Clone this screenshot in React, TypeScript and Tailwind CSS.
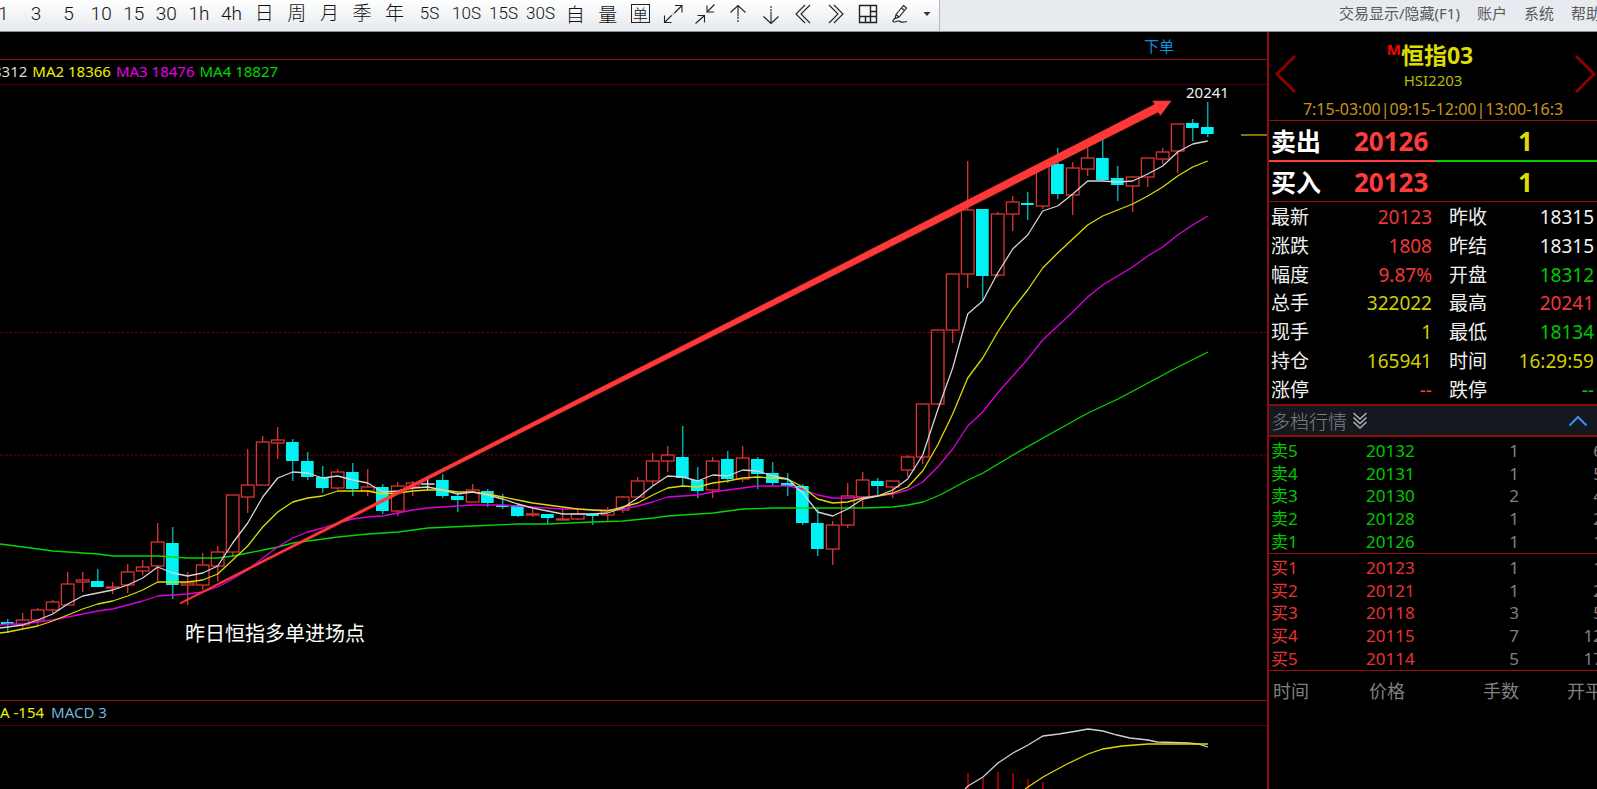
import type { ReactNode } from 'react';

type Kind = 'up' | 'down' | 'flat';

// high, body top, body bottom, low
type Candle = [number, number, number, number, Kind];

const STEP = 15;
const FIRST_X = 7.7;

const candles: Candle[] = [
  [619, 622, 624, 633, 'down'],
  [613, 620, 625, 628, 'up'],
  [608, 610, 620, 626, 'up'],
  [600, 602, 610, 613, 'up'],
  [572, 584, 605, 605, 'up'],
  [572, 580, 582, 592, 'up'],
  [569, 581, 587, 587, 'down'],
  [582, 587, 588, 594, 'up'],
  [564, 572, 585, 593, 'up'],
  [560, 567, 571, 575, 'up'],
  [523, 542, 566, 581, 'up'],
  [527, 543, 585, 599, 'down'],
  [572, 583, 585, 605, 'up'],
  [553, 565, 585, 590, 'up'],
  [546, 552, 566, 582, 'up'],
  [495, 495, 552, 557, 'up'],
  [449, 485, 497, 513, 'up'],
  [436, 442, 485, 485, 'up'],
  [427, 440, 443, 459, 'up'],
  [439, 442, 461, 481, 'down'],
  [452, 461, 477, 480, 'down'],
  [466, 477, 488, 493, 'down'],
  [469, 472, 488, 490, 'up'],
  [463, 472, 489, 496, 'down'],
  [469, 487, 491, 496, 'up'],
  [484, 487, 511, 514, 'down'],
  [482, 486, 511, 516, 'up'],
  [481, 483, 487, 496, 'up'],
  [477, 484, 484, 490, 'flat'],
  [474, 480, 496, 498, 'down'],
  [493, 496, 500, 512, 'down'],
  [484, 490, 502, 502, 'up'],
  [489, 491, 503, 507, 'down'],
  [494, 505, 507, 509, 'down'],
  [503, 505, 516, 517, 'down'],
  [508, 514, 515, 517, 'up'],
  [514, 514, 518, 524, 'down'],
  [509, 519, 520, 520, 'up'],
  [509, 514, 519, 520, 'up'],
  [514, 514, 516, 525, 'down'],
  [507, 510, 515, 522, 'up'],
  [496, 497, 510, 513, 'up'],
  [477, 481, 497, 497, 'up'],
  [453, 461, 481, 485, 'up'],
  [446, 455, 461, 472, 'up'],
  [426, 457, 478, 487, 'down'],
  [467, 480, 491, 498, 'down'],
  [457, 461, 490, 498, 'up'],
  [451, 459, 479, 483, 'down'],
  [446, 458, 479, 482, 'up'],
  [457, 459, 474, 489, 'down'],
  [462, 473, 483, 486, 'down'],
  [473, 483, 486, 496, 'down'],
  [484, 486, 523, 525, 'down'],
  [509, 523, 549, 556, 'down'],
  [521, 525, 549, 565, 'up'],
  [483, 496, 525, 528, 'up'],
  [472, 480, 497, 508, 'up'],
  [478, 481, 486, 495, 'down'],
  [481, 481, 487, 498, 'up'],
  [455, 457, 470, 477, 'up'],
  [404, 404, 457, 464, 'up'],
  [330, 330, 404, 405, 'up'],
  [274, 274, 330, 343, 'up'],
  [161, 210, 274, 288, 'up'],
  [209, 209, 276, 301, 'down'],
  [212, 214, 275, 277, 'up'],
  [196, 202, 214, 231, 'up'],
  [192, 203, 205, 220, 'down'],
  [165, 166, 206, 209, 'up'],
  [148, 164, 194, 199, 'down'],
  [162, 168, 195, 215, 'up'],
  [147, 158, 169, 176, 'up'],
  [139, 158, 180, 181, 'down'],
  [166, 178, 185, 201, 'down'],
  [176, 177, 186, 212, 'up'],
  [158, 158, 177, 187, 'up'],
  [148, 152, 159, 164, 'up'],
  [124, 124, 151, 173, 'up'],
  [119, 123, 128, 141, 'down'],
  [102, 127, 134, 137, 'down'],
];

const ma1 = [
  627, 625, 620, 614, 604, 596, 593, 590, 585, 578, 567, 573, 576, 573, 566, 543, 523, 497, 478, 472,
  473, 478, 476, 480, 483, 492, 491, 488, 487, 490, 494, 492, 495, 499, 504, 508, 511, 514, 514, 514,
  513, 508, 498, 486, 476, 477, 481, 475, 476, 470, 471, 476, 479, 493, 512, 516, 509, 499, 496, 490,
  479, 455, 410, 368, 314, 301, 273, 249, 235, 211, 206, 194, 181, 181, 182, 181, 174, 166, 152, 144, 141,
];

const ma2 = [
  632, 629, 626, 621, 615, 609, 604, 601, 596, 590, 582, 582, 582, 580, 574, 560, 546, 527, 512, 502,
  498, 496, 491, 491, 491, 494, 493, 491, 490, 490, 492, 492, 494, 497, 500, 503, 505, 507, 509, 510,
  511, 507, 503, 495, 488, 486, 487, 483, 481, 478, 477, 478, 479, 487, 499, 503, 502, 498, 496, 493,
  487, 471, 445, 414, 378, 358, 332, 309, 290, 268, 253, 239, 225, 216, 210, 204, 196, 187, 176, 167, 161,
];

const ma3 = [
  624, 624, 622, 620, 617, 614, 611, 609, 605, 601, 596, 595, 594, 592, 587, 579, 570, 558, 547, 538,
  532, 528, 523, 519, 517, 516, 513, 510, 508, 507, 506, 505, 505, 505, 506, 507, 508, 509, 509, 510,
  510, 509, 506, 502, 497, 496, 495, 492, 490, 488, 486, 486, 486, 489, 495, 498, 498, 497, 496, 494,
  490, 482, 467, 449, 426, 412, 393, 376, 359, 340, 326, 312, 297, 285, 276, 267, 256, 247, 235, 225, 216,
];

const ma4 =
  '0,544 8,545 23,547 38,549 53,551 68,552 98,554 113,556 158,556 188,558 218,558 233,556 248,553 263,550 278,547 293,543 308,541 323,539 338,537 368,534 398,532 428,528 473,526 518,524 548,524 593,522 623,521 653,518 668,516 713,513 743,509 773,508 803,508 833,508 863,508 893,507 908,505 923,502 940,495 968,480 983,473 1013,455 1043,438 1088,413 1118,399 1148,383 1178,367 1208,352';

const DIF =
  '965,789 968,786 983,777 998,763 1013,753 1028,745 1043,736 1059,734 1077,731 1088,729 1103,731 1117,735 1130,738 1148,740 1157,742 1188,743 1198,744 1208,747';
const DEA = '1025,789 1028,787 1043,777 1067,764 1088,754 1103,749 1122,746 1148,744 1208,744';
const macdBars = [773, 778, 772, 773, 779, 782];

const toPoints = (ys: number[]) => `0,${ys[0] + 1} ` + ys.map((y, i) => `${FIRST_X + i * STEP},${y}`).join(' ');

const periods = ['1', '3', '5', '10', '15', '30', '1h', '4h', '日', '周', '月', '季', '年'];
const seconds = ['5S', '10S', '15S', '30S'];

const RED = 'text-[#f03838]';
const GREEN = 'text-[#00c800]';
const YELLOW = 'text-[#cfcf00]';
const WHITE = 'text-[#f0f0f0]';

const stats = [
  ['最新', '20123', RED, '昨收', '18315', WHITE],
  ['涨跌', '1808', RED, '昨结', '18315', WHITE],
  ['幅度', '9.87%', RED, '开盘', '18312', GREEN],
  ['总手', '322022', YELLOW, '最高', '20241', RED],
  ['现手', '1', YELLOW, '最低', '18134', GREEN],
  ['持仓', '165941', YELLOW, '时间', '16:29:59', YELLOW],
  ['涨停', '--', RED, '跌停', '--', GREEN],
];

const asks = [
  ['卖5', '20132', '1', '6'],
  ['卖4', '20131', '1', '5'],
  ['卖3', '20130', '2', '4'],
  ['卖2', '20128', '1', '2'],
  ['卖1', '20126', '1', '1'],
];

const bids = [
  ['买1', '20123', '1', '1'],
  ['买2', '20121', '1', '2'],
  ['买3', '20118', '3', '5'],
  ['买4', '20115', '7', '12'],
  ['买5', '20114', '5', '17'],
];

function Icon({ children }: { children: ReactNode }) {
  return (
    <svg width="20" height="20" viewBox="0 0 20 20" fill="none" stroke="#222" strokeWidth="1.1" aria-hidden="true">
      {children}
    </svg>
  );
}

function ToolButton({ label, children }: { label?: string; children: ReactNode }) {
  return (
    <button type="button" aria-label={label} className="flex flex-1 items-center justify-center whitespace-nowrap">
      {children}
    </button>
  );
}

function Toolbar() {
  return (
    <header className="flex h-8 shrink-0 border-b border-[#8e9196] bg-[#e7eaef]">
      <div className="-ml-[13px] flex shrink-0 border-r border-[#b4b8bd] bg-linear-to-b from-white to-[#e6e9ee] pb-1 text-[19px] leading-none text-[#111]">
        <div className="flex w-[424px] font-['Roboto','Noto_Sans_CJK_SC',sans-serif] font-light">
          {periods.map((p) => (
            <ToolButton key={p}>{p}</ToolButton>
          ))}
        </div>
        <div className="flex w-[148px] font-['Roboto',sans-serif] text-[17px] font-light">
          {seconds.map((s) => (
            <ToolButton key={s}>{s}</ToolButton>
          ))}
        </div>
        <div className="flex w-[358px] font-['Noto_Sans_CJK_SC',sans-serif] font-light">
          <ToolButton>自</ToolButton>
          <ToolButton>量</ToolButton>
          <ToolButton>
            <span className="flex size-[19px] items-center justify-center border border-[#222] text-[15px]">单</span>
          </ToolButton>
          <ToolButton label="放大">
            <Icon>
              <path d="M12 1.5h7v7M1.5 11.500v7h7" />
              <path d="M19 1.500 12 8.500M1.500 18.500l7-7" />
              <path d="M12 8.500l-3.500 3" strokeDasharray="1 1" />
            </Icon>
          </ToolButton>
          <ToolButton label="缩小">
            <Icon>
              <path d="M12 1.500v6.500h7M2.500 11.500h7v7" />
              <path d="M19.500 .5 12 8M.5 19.500l9-8" />
            </Icon>
          </ToolButton>
          <ToolButton label="上移">
            <Icon>
              <path d="M2.500 8.500 10 1.500l7.500 7M10 1.500v11" />
              <path d="M10 13v6" strokeDasharray="2 1" />
            </Icon>
          </ToolButton>
          <ToolButton label="下移">
            <Icon>
              <path d="M2.500 12.500l7.500 7 7.500-7M10 19.500v-12" />
              <path d="M10 7V2" strokeDasharray="2 1" />
            </Icon>
          </ToolButton>
          <ToolButton label="后退">
            <Icon>
              <path d="M12 1 3 10l9 9M17 1l-9 9 9 9" />
            </Icon>
          </ToolButton>
          <ToolButton label="前进">
            <Icon>
              <path d="M3 1l9 9-9 9M8 1l9 9-9 9" />
            </Icon>
          </ToolButton>
          <ToolButton label="布局">
            <Icon>
              <path d="M1.500 1.500h17v17h-17zM12.500 1.500v17M1.500 12.500h17M12.500 7.500h6M7.500 12.500v6" strokeWidth="1.400" />
            </Icon>
          </ToolButton>
          <ToolButton label="画线">
            <Icon>
              <path d="M12.500 1.500l3 2.500-7.500 9-4 1.500 1-4zM10.500 4l3 2.500M5 10.500l3 2.500" />
              <path d="M4 14.500c-2 1-3 3-1 3.500s4-2 5-1 2 2 8 .5" />
            </Icon>
          </ToolButton>
        </div>
        <button type="button" aria-label="更多" className="flex w-[22px] items-center pl-1">
          <svg width="12" height="8" viewBox="0 0 12 8" aria-hidden="true">
            <path d="M2.500 2h7L6 6z" fill="#333" />
          </svg>
        </button>
      </div>
      <nav className="-mr-1 ml-auto flex items-center gap-[17px] whitespace-nowrap pb-1 text-[15px] text-[#5a5a5a]">
        <a href="#orders">交易显示/隐藏(F1)</a>
        <a href="#account">账户</a>
        <a href="#system">系统</a>
        <a href="#help">帮助</a>
      </nav>
    </header>
  );
}

function CandleShape({ x, candle }: { x: number; candle: Candle }) {
  const [high, top, bottom, low, kind] = candle;
  if (kind === 'flat') {
    return <path d={`M${x} ${high}V${low}M${x - 7} ${top}h14`} stroke="#d8d8d8" strokeWidth="1.3" />;
  }
  if (kind === 'down') {
    return (
      <g>
        <path d={`M${x} ${high}V${low}`} stroke="#00a8a8" strokeWidth="1.5" />
        <rect x={x - 6.7} y={top} width="12.700" height={Math.max(bottom - top, 2)} fill="#00f2f2" />
      </g>
    );
  }
  return (
    <g stroke="#dc3434" strokeWidth="1.3" fill="none">
      <path d={`M${x} ${high}V${top}M${x} ${bottom}V${low}`} />
      <rect x={x - 6.3} y={top} width="12.600" height={bottom - top} />
    </g>
  );
}

function PriceChart() {
  return (
    <svg className="h-full w-full" viewBox="0 85 1267 615" preserveAspectRatio="xMaxYMin slice" fill="none">
      <g stroke="#7a0000" strokeDasharray="3 1.500">
        <path d="M0 332.500H1267M0 455H1267" />
      </g>
      {candles.map((c, i) => (
        <CandleShape key={i} x={FIRST_X + i * STEP} candle={c} />
      ))}
      <g strokeWidth="1.300" strokeLinejoin="round">
        <polyline points={ma4} stroke="#00d800" />
        <polyline points={toPoints(ma3)} stroke="#dc00dc" />
        <polyline points={toPoints(ma2)} stroke="#dcdc00" />
        <polyline points={toPoints(ma1)} stroke="#d4d4d4" />
      </g>
      <path d="M1241 135h26" stroke="#a8a000" strokeWidth="1.500" />
      <polygon
        points="180,602.700 1155,104.300 1152.700,101 1171,101 1160.500,115.300 1158,112 180.500,604"
        fill="#ff3838"
        stroke="#ff3838"
        strokeWidth=".6"
      />
      <text x="1186" y="98" fontSize="15" fill="#f0f0f0">20241</text>
      <text x="185" y="641" fontSize="20" fill="#fff">昨日恒指多单进场点</text>
    </svg>
  );
}

function MacdChart() {
  return (
    <svg className="h-full w-full" viewBox="0 726 1267 63" preserveAspectRatio="xMaxYMin slice" fill="none">
      {macdBars.map((y, i) => (
        <path key={i} d={`M${968 + i * STEP} ${y}V789`} stroke="#b40000" strokeWidth="1.600" />
      ))}
      <polyline points={DIF} stroke="#d0d0d0" strokeWidth="1.300" />
      <polyline points={DEA} stroke="#dcdc00" strokeWidth="1.300" />
    </svg>
  );
}

function ChartPanel() {
  return (
    <main className="flex min-w-0 flex-1 flex-col overflow-hidden whitespace-nowrap text-[15px]">
      <div className="flex h-7 shrink-0 items-center justify-end border-b border-[#960a0a] pt-[2px] pr-[93px]">
        <button type="button" className="text-[#1090dc]">下单</button>
      </div>
      <div className="-ml-[7px] flex h-[25px] shrink-0 items-center gap-[5px] border-b border-[#560000] pb-[2px]">
        <span className="text-[#d8d8d8]">8312</span>
        <span className="text-[#f0f000]">MA2 18366</span>
        <span className="text-[#e800e8]">MA3 18476</span>
        <span className="text-[#00d800]">MA4 18827</span>
      </div>
      <div className="min-h-0 flex-1">
        <PriceChart />
      </div>
      <div className="flex h-[26px] shrink-0 items-center gap-[7px] border-y border-t-[#960a0a] border-b-[#560000] pb-[2px]">
        <span className="text-[#f0f000]">A -154</span>
        <span className="text-[#70b4dc]">MACD 3</span>
      </div>
      <div className="h-[63px] shrink-0">
        <MacdChart />
      </div>
    </main>
  );
}

function DepthTable({ rows, tone }: { rows: string[][]; tone: string }) {
  return (
    <table className="h-[116px] w-[334px] table-fixed border-separate border-spacing-0 pt-[2px] text-[17px] leading-none">
      <colgroup>
        <col className="w-[97px]" />
        <col className="w-[70px]" />
        <col className="w-[83px]" />
        <col className="w-[84px]" />
      </colgroup>
      <tbody>
        {rows.map(([level, price, qty, total]) => (
          <tr key={level}>
            <th scope="row" className={`p-0 pl-[2px] text-left font-normal ${tone}`}>{level}</th>
            <td className={`p-0 ${tone}`}>{price}</td>
            <td className="p-0 text-right text-[#808080]">{qty}</td>
            <td className="p-0 text-right text-[#808080]">{total}</td>
          </tr>
        ))}
      </tbody>
    </table>
  );
}

function QuotePanel() {
  return (
    <aside className="w-[330px] shrink-0 overflow-hidden whitespace-nowrap border-l-2 border-[#8c0c0c]">
      <section className="flex h-[89px] items-center justify-between border-b border-[#960a0a]">
        <button type="button" aria-label="上一个合约" className="shrink-0 pb-1 pl-[5px]">
          <svg width="22" height="38" viewBox="0 0 22 38" fill="none" stroke="#8c0000" strokeWidth="3" aria-hidden="true">
            <path d="M21 1 3 19l18 18" />
          </svg>
        </button>
        <div className="flex w-0 flex-col items-center">
          <h1 className="flex items-start pt-2 pr-[6px] text-[23px] leading-[32px] font-bold text-[#dcdc00]">
            <span className="text-[15px] leading-[20px] text-[#ff0000]">M</span>
            恒指03
          </h1>
          <p className="text-[15px] leading-[18px] text-[#b4be00]">HSI2203</p>
          <p className="pt-2 text-[16px] leading-[24px] text-[#c8961e]">7:15-03:00|09:15-12:00|13:00-16:3</p>
        </div>
        <button type="button" aria-label="下一个合约" className="shrink-0 pb-1 pl-[5px]">
          <svg width="22" height="38" viewBox="0 0 22 38" fill="none" stroke="#8c0000" strokeWidth="3" aria-hidden="true">
            <path d="M1 1l18 18L1 37" />
          </svg>
        </button>
      </section>

      <section className="border-b border-[#960a0a] text-[25px] leading-[38px] font-bold">
        <div className="grid grid-cols-[83px_1fr_79px] pt-px pl-[2px]">
          <span className="text-white">卖出</span>
          <span className="text-[26px] text-[#ff3c3c]">20126</span>
          <span className="text-[26px] text-[#dcdc00]">1</span>
        </div>
        <div className="flex h-[2px]">
          <div className="w-[51%] bg-[#ff3c3c]" />
          <div className="flex-1 bg-[#00d200]" />
        </div>
        <div className="grid grid-cols-[83px_1fr_79px] pt-px pl-[2px]">
          <span className="text-white">买入</span>
          <span className="text-[26px] text-[#ff3c3c]">20123</span>
          <span className="text-[26px] text-[#dcdc00]">1</span>
        </div>
      </section>

      <table className="h-[202px] w-full table-fixed text-[19px] leading-none">
        <colgroup>
          <col className="w-[60px]" />
          <col className="w-[103px]" />
          <col className="w-[56px]" />
          <col />
        </colgroup>
        <tbody>
          {stats.map(([a, av, ac, b, bv, bc]) => (
            <tr key={a}>
              <th scope="row" className="p-0 pt-[2px] pl-[2px] text-left font-normal text-[#f0f0f0]">{a}</th>
              <td className={`p-0 pt-[2px] text-right ${ac}`}>{av}</td>
              <th scope="row" className="p-0 pt-[2px] pl-[17px] text-left font-normal text-[#f0f0f0]">{b}</th>
              <td className={`p-0 pt-[2px] pr-[3px] text-right ${bc}`}>{bv}</td>
            </tr>
          ))}
        </tbody>
      </table>

      <button
        type="button"
        className="flex h-[33px] w-full items-center border-y-2 border-[#8c0c0c] bg-[#14181f] pt-1 pr-[9px] pl-[2px] text-[19px] leading-none font-light text-[#808080]"
      >
        多档行情
        <svg className="mb-1 ml-1" width="18" height="20" viewBox="0 0 18 20" fill="none" stroke="#b4b4b4" strokeWidth="1.500" aria-hidden="true">
          <path d="M2.500 2 9 8l6.500-6M2.500 6.500l6.500 6 6.500-6M2.500 11l6.500 6 6.500-6" />
        </svg>
        <svg className="mb-1 ml-auto" width="20" height="12" viewBox="0 0 20 12" fill="none" stroke="#3c8cf0" strokeWidth="2" aria-hidden="true">
          <path d="M1.500 10.500 10 2l8.500 8.500" />
        </svg>
      </button>

      <DepthTable rows={asks} tone="text-[#00c800]" />
      <div className="border-y border-[#a00a0a]">
        <DepthTable rows={bids} tone="text-[#e63434]" />
      </div>

      <table className="h-10 w-[334px] table-fixed text-[18px] leading-none text-[#808080]">
        <colgroup>
          <col className="w-[97px]" />
          <col className="w-[70px]" />
          <col className="w-[83px]" />
          <col className="w-[84px]" />
        </colgroup>
        <thead>
          <tr>
            <th scope="col" className="p-0 pl-1 text-left font-normal">时间</th>
            <th scope="col" className="p-0 pl-[3px] text-left font-normal">价格</th>
            <th scope="col" className="p-0 text-right font-normal">手数</th>
            <th scope="col" className="p-0 text-right font-normal">开平</th>
          </tr>
        </thead>
      </table>
    </aside>
  );
}

export default function App() {
  return (
    <div className="flex h-screen flex-col overflow-hidden bg-black font-['Noto_Sans','Noto_Sans_CJK_SC',sans-serif]">
      <Toolbar />
      <div className="flex min-h-0 flex-1">
        <ChartPanel />
        <QuotePanel />
      </div>
    </div>
  );
}
